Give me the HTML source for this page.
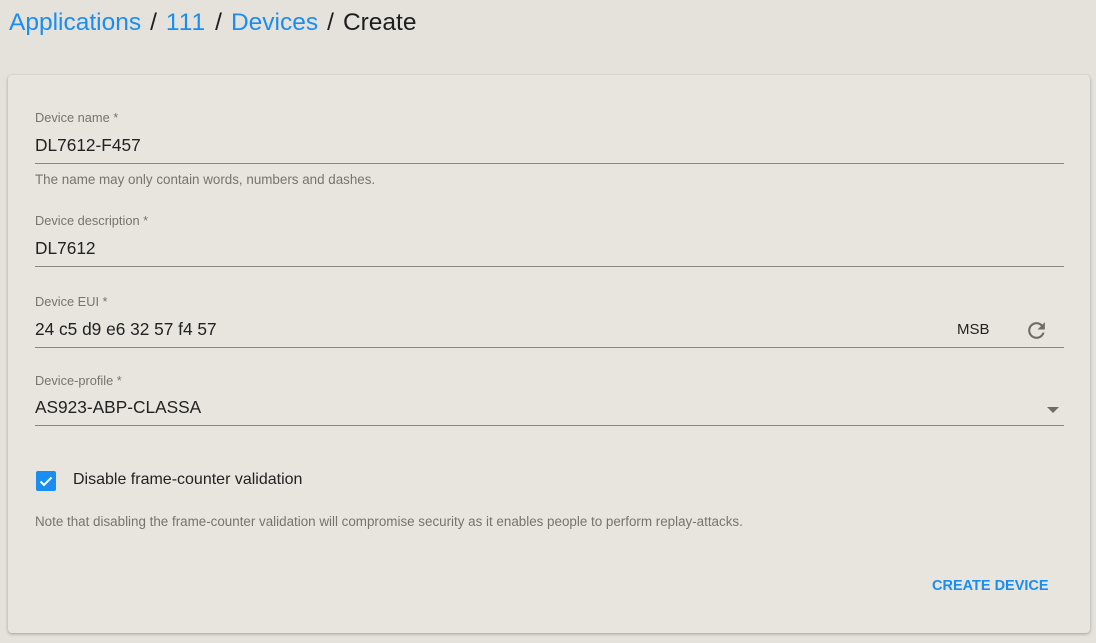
<!DOCTYPE html><html><head><style>
body{margin:0;background:#e5e2dc;font-family:"Liberation Sans",sans-serif;width:1096px;height:643px;overflow:hidden;position:relative}
.bc{position:absolute;left:9px;top:9px;font-size:24.5px;color:#1e1e1e;white-space:nowrap}
.bc a{color:#1a8ef0;text-decoration:none}
.bc span{padding:0 9px}
.card{position:absolute;left:8px;top:75px;width:1082px;height:558px;background:#e8e5df;border-radius:4px;box-shadow:0 1px 3px rgba(0,0,0,.3)}
.f{position:absolute;left:27px;width:1029px;border-bottom:1px solid #8a8884}
.lab{position:absolute;font-size:12.8px;color:#77736e;left:27px}
.val{position:absolute;font-size:17.3px;color:#222;left:27px}
.s{position:absolute;font-size:13.4px;color:#77736e;left:27px}
</style></head><body>
<div class="bc"><a>Applications</a><span>/</span><a style="letter-spacing:1px">111</a><span>/</span><a>Devices</a><span>/</span>Create</div>
<div class="card">
<div class="lab" style="top:35px">Device name *</div>
<div class="val" style="top:60px">DL7612-F457</div>
<div class="f" style="top:88px"></div>
<div class="s" style="top:97px">The name may only contain words, numbers and dashes.</div>
<div class="lab" style="top:138px">Device description *</div>
<div class="val" style="top:163px">DL7612</div>
<div class="f" style="top:191px"></div>
<div class="lab" style="top:219px">Device EUI *</div>
<div class="val" style="top:244px">24 c5 d9 e6 32 57 f4 57</div>
<div style="position:absolute;left:949px;top:246px;font-size:15px;color:#222">MSB</div>
<svg style="position:absolute;left:1016px;top:243px" width="25" height="25" viewBox="0 0 24 24"><path fill="#6f6c68" d="M17.65 6.35A7.958 7.958 0 0 0 12 4c-4.42 0-7.99 3.58-7.990 8s3.57 8 7.99 8c3.73 0 6.84-2.55 7.73-6h-2.08A5.99 5.99 0 0 1 12 18c-3.31 0-6-2.69-6-6s2.69-6 6-6c1.66 0 3.14.69 4.22 1.78L13 11h7V4l-2.35 2.35z"/></svg>
<div class="f" style="top:272px"></div>
<div class="lab" style="top:298px">Device-profile *</div>
<div class="val" style="top:322px">AS923-ABP-CLASSA</div>
<div style="position:absolute;left:1039px;top:332px;width:0;height:0;border-left:6px solid transparent;border-right:6px solid transparent;border-top:6px solid #6f6c68"></div>
<div class="f" style="top:350px"></div>
<div style="position:absolute;left:28px;top:396px;width:20px;height:20px;background:#1a8ef0;border-radius:2px"><svg width="20" height="20" viewBox="0 0 20 20"><path d="M4.5 10.5l3.5 3.5 7.5-7.5" stroke="#fff" stroke-width="2" fill="none"/></svg></div>
<div style="position:absolute;left:65px;top:396px;font-size:16px;color:#222">Disable frame-counter validation</div>
<div class="s" style="top:439px">Note that disabling the frame-counter validation will compromise security as it enables people to perform replay-attacks.</div>
<div style="position:absolute;left:924px;top:503px;font-size:14.5px;color:#1a8ef0;font-weight:bold">CREATE DEVICE</div>
</div>
</body></html>
